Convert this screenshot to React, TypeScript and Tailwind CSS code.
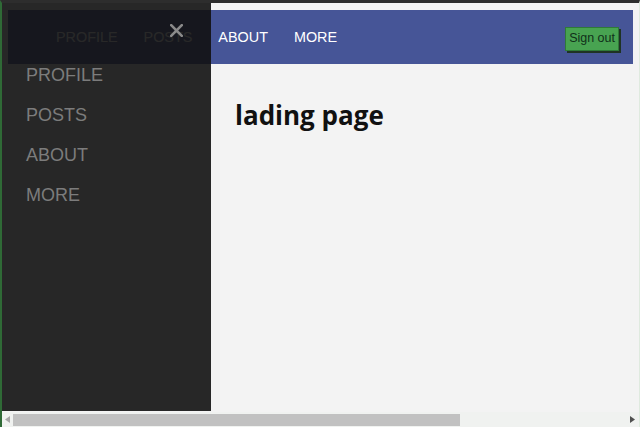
import React from "react";

export default function App() {
  const navLinks = ["PROFILE", "POSTS", "ABOUT", "MORE"];
  return (
    <div className="relative flex h-[427px] w-[640px] flex-col overflow-hidden border-l-2 border-t-[3px] border-l-[#2f6a36] border-t-[#2d2d2d] border-r border-r-[#dfeadf] bg-[#f3f3f3] font-['Liberation_Sans',Arial,sans-serif]">
      <div className="relative h-[409px] shrink-0">
        <nav className="ml-[6px] mt-[7px] flex h-[54px] w-[625px] items-center bg-[#465597]">
          <div className="mt-[2px] flex gap-[26px] pl-[48px] text-[14.4px] text-white">
            {navLinks.map((l) => (
              <span key={l}>{l}</span>
            ))}
          </div>
          <button className="ml-auto mr-[14px] mt-[3px] h-[24px] border border-[#2f7a38] bg-[#48a351] px-[3px] text-[12.5px] leading-none text-[#10301a] shadow-[2px_2px_0_#1f3324]">
            Sign out
          </button>
        </nav>
        <h1 className="ml-[233px] mt-[38px] font-['Open_Sans',sans-serif] text-[26px] font-bold leading-none text-[#111]">
          lading page
        </h1>

        <aside className="absolute left-0 top-[-3px] h-[411px] w-[209px] bg-[rgba(17,17,17,0.9)] pl-[24px] pt-[55px]">
          <svg
            className="absolute left-[168px] top-[24px]"
            width="13"
            height="13"
            viewBox="0 0 13 13"
          >
            <path d="M1.2 1.2 L11.8 11.8 M11.8 1.2 L1.2 11.8" stroke="#8a8a8a" strokeWidth="2.6" strokeLinecap="round" />
          </svg>
          <div className="flex flex-col text-[18px] leading-[40px] text-[#7c7c7c]">
            {navLinks.map((l) => (
              <span key={l}>{l}</span>
            ))}
          </div>
        </aside>
      </div>
      <div className="flex h-[15px] shrink-0 items-center bg-[#f0f2f0]">
        <div className="flex w-[11px] items-center justify-center">
          <svg width="5" height="7" viewBox="0 0 5 7">
            <path d="M5 0 L0 3.5 L5 7 Z" fill="#a8a8a8" />
          </svg>
        </div>
        <div className="h-[12px] w-[447px] bg-[#c1c1c1]" />
        <div className="ml-auto flex w-[14px] items-center justify-center">
          <svg width="5" height="7" viewBox="0 0 5 7">
            <path d="M0 0 L5 3.5 L0 7 Z" fill="#505050" />
          </svg>
        </div>
      </div>
    </div>
  );
}
